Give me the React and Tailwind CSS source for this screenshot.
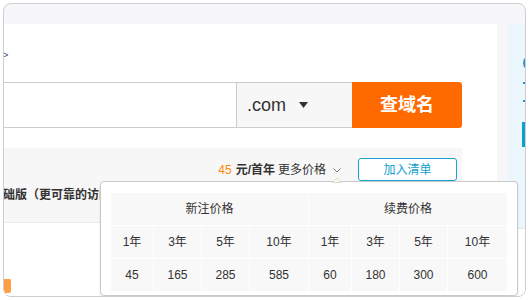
import React from "react";

const newPrices = [
  ["1年", "45"],
  ["3年", "165"],
  ["5年", "285"],
  ["10年", "585"],
];
const renewPrices = [
  ["1年", "60"],
  ["3年", "180"],
  ["5年", "300"],
  ["10年", "600"],
];

const Cell = ({ children, span }) => (
  <div
    className={`h-[32px] bg-[#f8f8f8] flex items-center justify-center text-[12px] text-[#333] ${
      span ? "col-span-4" : ""
    }`}
  >
    {children}
  </div>
);

const PricePopup = () => (
  <div className="absolute left-[96px] top-[177px] w-[418px] bg-white border border-[#c9c9c9] rounded-[4px] px-[10px] pt-[11px] pb-[4px] shadow-[0_1px_3px_rgba(0,0,0,0.08)]">
    {/* caret */}
    <svg className="absolute left-[231px] top-[-5px]" width="10" height="6" viewBox="0 0 10 6">
      <path d="M0.5 5.5 L5 0.8 L9.5 5.5 Z" fill="#fcf9e8" stroke="#dcdacb" strokeWidth="1" />
    </svg>
    <div className="grid grid-cols-[42px_47px_47px_58px_42px_47px_47px_59px] gap-px">
      <Cell span>新注价格</Cell>
      <Cell span>续费价格</Cell>
      {newPrices.map(([y]) => (
        <Cell key={"ny" + y}>{y}</Cell>
      ))}
      {renewPrices.map(([y]) => (
        <Cell key={"ry" + y}>{y}</Cell>
      ))}
      {newPrices.map(([y, p]) => (
        <Cell key={"np" + y}>{p}</Cell>
      ))}
      {renewPrices.map(([y, p]) => (
        <Cell key={"rp" + y}>{p}</Cell>
      ))}
    </div>
  </div>
);

export default function App() {
  return (
    <div className="w-[530px] h-[300px] bg-white pt-[3px] pl-[3px] font-['Liberation_Sans','Noto_Sans_CJK_SC',sans-serif]">
      <div className="relative w-[523px] h-[294px] border border-[#cdcdd5] rounded-[8px] overflow-hidden bg-[#f7f7f9] flex flex-col">
        {/* top strip */}
        <div className="h-[20px] shrink-0" />

        <div className="flex flex-1 min-h-0">
          {/* main panel */}
          <div className="w-[493px] bg-white pr-[35px] flex flex-col">
            {/* breadcrumb */}
            <div className="h-[58px] pt-[25px] text-[9px] leading-[12px] text-[#2d4466]">
              <span className="ml-[-1px]">&gt;</span>
            </div>

            {/* search bar */}
            <div className="flex h-[46px]">
              <div className="flex-1 bg-white border-y border-r border-[#cccccc]" />
              <div className="w-[115px] bg-[#f7f7f7] border-y border-[#cccccc] flex items-center pl-[10px] gap-[13px]">
                <span className="text-[18px] text-[#333]">.com</span>
                <svg width="9" height="6" viewBox="0 0 9 6">
                  <path d="M0 0 H9 L4.5 6 Z" fill="#333" />
                </svg>
              </div>
              <button className="w-[110px] bg-[#ff6a00] rounded-r-[3px] text-white text-[18px] font-bold">
                查域名
              </button>
            </div>

            {/* result row */}
            <div className="mt-[20px] h-[75px] bg-[#f7f7f7] border-b border-[#ebebeb] pt-[10px]">
              <div className="flex items-center justify-end pr-[5px] h-[23px]">
                <span className="text-[12px] text-[#ff8800]">45</span>
                <span className="text-[12px] font-bold text-[#333] ml-[4px]">元/首年</span>
                <span className="text-[12px] text-[#333] ml-[3px]">更多价格</span>
                <svg className="ml-[7px] mt-[2px]" width="8" height="5" viewBox="0 0 8 5">
                  <path d="M0.5 0.5 L4 4 L7.5 0.5" fill="none" stroke="#777" strokeWidth="1" />
                </svg>
                <button className="ml-[17px] w-[99px] h-[23px] rounded-[3px] border border-[#1aa3d0] bg-white text-[12px] text-[#12a0cf]">
                  加入清单
                </button>
              </div>
              <div className="mt-[6px] ml-[-13px] text-[12px] leading-[16px] font-bold text-[#333] whitespace-nowrap">
                基础版（更可靠的访问）
              </div>
            </div>

            {/* next item */}
            <div className="mt-[56px] ml-[-4px] w-[11px] h-[14px] rounded-[2px] bg-[#ff9e42]" />
          </div>

          {/* gutter */}
          <div className="w-[11px]" />

          {/* side card */}
          <div className="flex-1 flex flex-col">
            <div className="h-[204px] bg-[#ebf6fd] flex flex-col items-end pt-[31px]">
              <div className="w-[16px] h-[16px] rounded-full border-[3px] border-[#2b93d6] mr-[-14px]" />
              <div className="w-[2px] h-[2px] bg-[#2b93d6] mt-[11px]" />
              <div className="w-[2px] h-[2px] bg-[#2b93d6] mt-[16px]" />
              <div className="w-[3px] h-[25px] bg-[#0aa0d0] mt-[20px]" />
            </div>
            <div className="flex-1 bg-white border-t border-[#e5e5e5]" />
          </div>
        </div>

        <PricePopup />
      </div>
    </div>
  );
}
